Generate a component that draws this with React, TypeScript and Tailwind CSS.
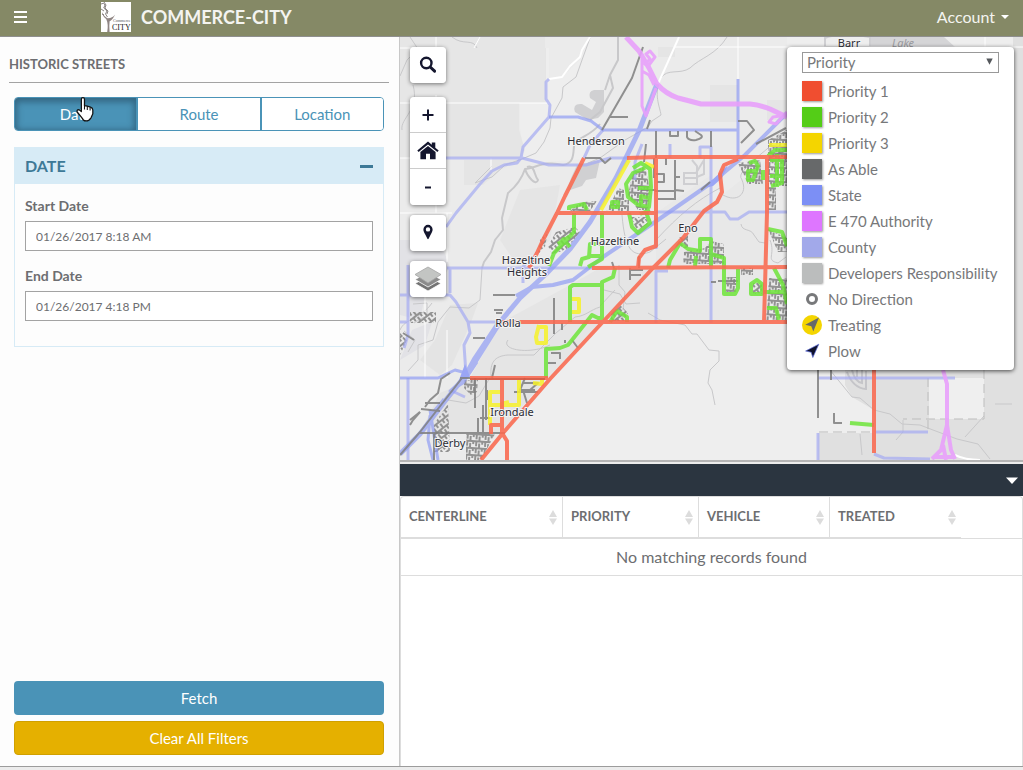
import { useState } from "react";
import type { ReactNode } from "react";

const FONT = "font-['Century_Gothic','Lato',sans-serif]";

type Line = { d: string; w?: number };

const WHITE_ROADS: Line[] = [
  { d: "M436 37V60M436 95V213M400 48H436M400 103H549M400 158H446M400 213H452M738 37V79M675 47H1023M985 37V47", w: 1 },
  { d: "M679 37L658 84M590 37L582 50L580 57L570 66L562 77L549 79", w: 2 },
  { d: "M491 158V170M447 213V262M480 37L474 48M425 268V378M447 378V330", w: 1 },
];

const CREEKS: Line[] = [
  { d: "M590 38L582 60L576 77L563 87L562 98L551 118L550 128L544 142L536 153L522 159L505 165L492 177L483 180L475 183L482 176" },
  { d: "M527 167C535 164 534 176 538 180C536 187 527 176 525 169C522 178 518 185 508 193L502 218L503 230L495 240L491 252L484 262L482 268", w: 2 },
  { d: "M525 169C536 168 545 160 563 165C577 163 572 148 575 142C585 135 592 134 600 124", w: 2 },
  { d: "M618 37V60L610 75L613 88L600 112L590 120M610 75L605 90", w: 2 },
  { d: "M727 37C716 55 700 58 690 68C680 75 667 68 661 78C653 94 660 107 661 115L652 121L648 127L625 140L600 158L588 163" },
  { d: "M410 37L418 49L407 60L400 76M452 37C463 46 473 38 477 48" },
  { d: "M482 268L480 300L469 308L450 307L438 322L433 340L418 345V360L408 371" },
  { d: "M600 307C590 310 586 316 575 317L556 333L534 355H508C494 356 490 363 491 376L479 396L466 403L448 400M600 306L615 290" },
  { d: "M604 290L620 294L626 304L640 303M648 313L660 320L675 323L685 325L692 334H697L709 350L719 351V361L710 370L708 383L712 390L715 405" },
  { d: "M619 265V285L625 292L623 310M622 215C625 250 632 258 650 252L666 239M656 240C679 215 697 200 720 188" },
  { d: "M723 195C737 203 748 194 742 180C737 173 748 168 750 163L767 149L786 130M741 224C742 232 751 228 754 235L759 242L765 243" },
  { d: "M432 303C420 320 405 318 400 330M413 304L427 303V315L414 323M404 331L415 340L408 352" },
  { d: "M830 370L852 397L860 398L874 410L890 414L902 424L920 425L933 430L957 439L978 444L990 459M903 420V432L896 440M965 437L984 416M860 434L862 455M995 404L1012 404" },
  { d: "M480 178L492 166M413 85C420 110 400 118 402 130M508 340C500 350 530 355 550 345M770 240C776 255 765 260 778 263L786 257" },
];

const BLUE: Line[] = [
  { d: "M657 84L639 131L616 178L590 222L570 249L546 274L520 298L500 322L470 370L445 401L420 434L400 454", w: 5 },
  { d: "M787 113L745 155L714 181L655 222L603 257L573 280L553 285L532 287L516 296", w: 4 },
  { d: "M498 322L474 358L462 380L450 391L463 383L477 362", w: 3 },
  { d: "M738 79V156M602 130H738M549 117H578L591 121L603 130", w: 3 },
  { d: "M444 399L430 416L428 440L433 460M430 410L438 460M400 378H438L455 370L466 373", w: 3 },
];

const COUNTY: Line[] = [
  { d: "M549 79L546 82V99L550 105L549 117L523 147L521 158L517 163L504 165L492 171L480 184L456 213L446 227" },
  { d: "M446 158H522L549 165H586L610 158H627M603 130L590 145L584 158" },
  { d: "M447 268H592M400 295H450L456 302L468 322H502M450 269V293M468 322L470 333L464 345L466 374" },
  { d: "M408 265V335L404 348M408 378V460M400 322H407" },
  { d: "M642 144L635 162V180M670 144V158M700 158V147H711V323M656 212H716L725 212L730 219H738L749 212H787" },
  { d: "M656 323V271H668M656 249V212M818 378H955M876 432H928M818 433V460M874 454L884 458L930 459" },
  { d: "M523 283V267L530 258M452 391L465 397" },
];

const GREY: Line[] = [
  { d: "M643 47L632 78L602 130M610 117H628M585 158H600L605 163L611 158M656 131V158M646 144L644 162M711 131V147M670 131V136H678V131M687 131V137Q689 141 696 140Q704 138 701 135L695 131M650 120L647 129" },
  { d: "M738 121H747L754 130L741 143M654 158V178M666 158V165M675 160V200M655 191H675M656 174H664V182H657M675 177H680M675 190L684 191M658 199H675M641 190H656" },
  { d: "M462 378L420 432L400 455M420 433H505M460 378H470M818 370V418M493 295H515M494 310H503M496 313H502M473 338H485M554 298V334M562 323V330" },
  { d: "M450 373L441 379L438 393L430 400L425 407M425 403H440M421 409L440 411M420 412L413 420L410 425M495 365L492 378M475 378V408M486 378V420M478 418V432M483 405V433M487 390V400" },
  { d: "M525 378L520 390H535M548 363H556M551 353H560V359M572 340L578 348M565 343V340M523 383H538L530 390M523 390L527 403M514 392H538M480 418H490" },
  { d: "M630 268V280M629 270H643M639 256V268M641 275H630M612 262L614 268M718 281H738M711 282H716M769 158L787 150M756 144L786 128M701 190L710 182" },
  { d: "M831 370V380M834 413V423H842M800 130L785 160M403 333L414 340M434 460V433M410 420L420 412", w: 2 },
];

const RED: Line[] = [
  { d: "M584 158L565 196L557 213L543 240L537 253L529 268" },
  { d: "M557 213H655M627 158L656 157H787M656 157V246L645 250L639 258L638 268" },
  { d: "M738 159L724 165L720 174L722 192L717 202L704 211L683 238L653 268L600 325L550 379L503 433L481 460" },
  { d: "M767 158V213L764 323M592 268L787 267M500 322H787M470 378H548M502 378V433L507 441V460M502 425H491V434" },
  { d: "M874 370V453" },
];

const GREEN: Line[] = [
  { d: "M569 210V207L584 204L587 210M574 213V232L554 253L549 266M562 238L570 247M558 244L572 235M580 266L582 259L589 257L590 244H600M589 256H601" },
  { d: "M633 168L641 163L650 169L651 187L649 207L638 205L628 197L626 184L633 173L645 168M638 188H650M641 205V196L648 198M612 202H618V207H612Z" },
  { d: "M629 213L632 227L638 233L650 223L646 212M602 213V259L588 267M650 210L640 214" },
  { d: "M749 163L755 161L758 166L753 180H748V171H757M763 170V180M768 156L775 150H787M777 154V187M770 160H782V183L771 186M770 176H783" },
  { d: "M546 378V349L560 348L568 345L580 330L592 315L598 318H602V282L613 277L615 268M570 322V287L573 285H601" },
  { d: "M668 268L670 260L680 243L688 249L700 251V239H711V254L724 258V294H735L738 288V269M711 254V266M695 266L696 256" },
  { d: "M757 280L751 284V294H762V284ZM761 292H784M774 268L783 285L787 304M768 229L782 232L787 246M767 308H776L779 320" },
  { d: "M610 322L617 311L627 317V322M850 423L874 425" },
];

const YELLOW: Line[] = [
  { d: "M629 160L601 210M645 163L654 167M769 145H787M572 299L579 299V312H572" },
  { d: "M538 327H546V343H537L536 337L539 325M490 425V392H500M491 405H519V380M533 383L542 384V379M501 404L509 402" },
];

const MAGENTA: Line[] = [
  { d: "M626 37L639 51L649 68L657 84Q666 94 678 98Q690 101 701 104H750Q760 105 770 109L787 117", w: 5 },
  { d: "M642 59V106L646 116L656 88M642 71L649 75L654 85M644 65L650 59L646 54L650 51L655 57L649 65M787 115L773 117L769 122L776 124L787 112", w: 3 },
  { d: "M943 370L947 384L947 425L941 450L932 459M947 425L951 450L955 459M943 445L946 460M934 457H954", w: 4 },
];

const TOWNS = [
  { x: 596, y: 145, t: "Henderson" },
  { x: 615, y: 245, t: "Hazeltine" },
  { x: 688, y: 232, t: "Eno" },
  { x: 526, y: 264, t: "Hazeltine" },
  { x: 527, y: 276, t: "Heights" },
  { x: 508, y: 327, t: "Rolla" },
  { x: 512, y: 416, t: "Irondale" },
  { x: 450, y: 447, t: "Derby" },
  { x: 849, y: 47, t: "Barr" },
];

function Lines({ items, color, width, opacity = 1 }: { items: Line[]; color: string; width: number; opacity?: number }) {
  return (
    <g fill="none" stroke={color} strokeLinejoin="round" opacity={opacity}>
      {items.map((l) => (
        <path key={l.d} d={l.d} strokeWidth={l.w ?? width} />
      ))}
    </g>
  );
}

function StreetMap() {
  return (
    <svg viewBox="400 37 623 424" preserveAspectRatio="xMinYMin slice" className="block h-full w-full" aria-label="Street map">
      <defs>
        <pattern id="blocks" width="9" height="7" patternUnits="userSpaceOnUse" patternTransform="rotate(4)">
          <path d="M0 1H7M2 1V6M5 3V7M8 0V4" stroke="#929292" strokeWidth="2" fill="none" />
        </pattern>
        <pattern id="slanted" width="8" height="7" patternUnits="userSpaceOnUse" patternTransform="rotate(-38)">
          <path d="M0 1H8M2 1V5M6 3V7" stroke="#929292" strokeWidth="2" fill="none" />
        </pattern>
      </defs>
      <rect x="400" y="37" width="623" height="424" fill="#eeeeee" />
      <path d="M400 37H590L580 60L562 77L549 79V48H546V103H520V128L523 147L521 158L545 162L600 158V37H787V323H600L482 460H400Z" fill="#ebebeb" />
      <path d="M436 48H546V103H519V130L525 150L520 158H436ZM400 103H436V158H400Z" fill="#e5e5e5" />
      <path d="M400 37H545V103H400Z" fill="#e6e6e6" />
      <path d="M464 160H520L500 170L483 185H464ZM520 190L560 185L550 240L519 268L500 240ZM710 85H738V122H710ZM658 47H675V57H658ZM767 100H787V120H767Z" fill="#e5e5e5" />
      <path d="M500 323L570 285L600 268H764V323H603L550 378H470Z" fill="#e5e5e5" />
      <path d="M656 213L711 175V323H656ZM722 195L767 160V323H711V213Z" fill="#e8e8e8" />
      <path d="M450 305L478 303L470 325L452 365L440 375L420 360L435 340ZM440 393L470 380H545L500 433H420Z" fill="#e4e4e4" />
      <path d="M400 240H440L450 268L425 295L420 320L400 315ZM412 330L432 322L425 345L400 360Z" fill="#e2e2e6" />
      <path d="M874 370H1023V461H874V410L852 397L845 385V370ZM818 433H874V460H818ZM1013 37H1023V370H1013Z" fill="#e0e0e0" />
      <path d="M929 378H984V419H929Z" fill="#efefef" />
      <path d="M590 98Q588 91 594 90H604V112L598 118L588 120L575 112Q572 103 582 104L592 110L596 102ZM577 165L600 160L596 178L586 180L582 186L567 191L571 178Z" fill="#d0d0d2" />
      <path d="M870 37H944L955 47H870Z" fill="#d5d5d7" />
      <path d="M825 38Q840 32 870 37V47H825ZM692 160L697 166V177L704 174V160L696 173H684V184H697V172M684 178H697" fill="none" stroke="#cfcfd2" strokeWidth="2" />
      <path d="M847 372Q853 388 866 389V371M852 370Q855 382 862 383V370M857 370V377" fill="none" stroke="#c5c5c9" strokeWidth="2" />
      <Lines items={CREEKS} color="#c8c8ca" width={1} />
      <Lines items={WHITE_ROADS} color="#ffffff" width={1} />
      <path d="M819 432H874M928 378V430M984 370V419H903" fill="none" stroke="#bdbdbd" strokeWidth="1" strokeDasharray="9 5" />
      <path d="M955 455Q965 460 980 460" fill="none" stroke="#fff" strokeWidth="2" />

      <path d="M576 206L584 202L597 201L590 211H570ZM633 172L645 166L650 190L648 210H638L628 195ZM612 201L618 188L624 190V200H629V211H606ZM738 163L760 160L763 184H748ZM768 140L787 130V186H776V210H768ZM769 278H787V320H766ZM684 252L705 248L711 241L724 244V264H683ZM464 380H478L477 392L471 395L464 388ZM466 434H495L481 460H466ZM726 277H736V292H726ZM768 229L787 238V252H778ZM741 268H753V275H741Z" fill="url(#blocks)" />
      <path d="M556 232L575 227L580 232L566 250L552 254L548 246ZM631 217H646L648 224L637 231ZM410 312H436V323H410ZM400 333L407 340L400 355ZM434 424L448 404L450 452H434ZM611 314L620 305L628 313L624 321H611ZM678 238L688 235V248H680ZM753 283H762V294H753ZM540 240L548 231L545 247L538 254Z" fill="url(#slanted)" />

      <Lines items={COUNTY} color="#a5abf3" width={3} opacity={0.7} />
      <Lines items={BLUE} color="#8e9bf5" width={4} opacity={0.68} />
      <path d="M728 165L704 188L713 186L722 178ZM465 364L459 380L470 377Z" fill="#9aa5f5" />
      <Lines items={GREY} color="#808080" width={2} opacity={0.85} />
      <Lines items={MAGENTA} color="#e8a0fb" width={4} opacity={0.9} />
      <Lines items={YELLOW} color="#f7f229" width={4} opacity={0.85} />
      <Lines items={GREEN} color="#6fe53b" width={4} opacity={0.85} />
      <Lines items={RED} color="#fa6a50" width={4} opacity={0.88} />
      <path d="M470 379H545" stroke="#b54836" strokeWidth="1" />

      <g className="font-['Noto_Sans',sans-serif] text-[11px]" textAnchor="middle" stroke="#f4f4f4" strokeWidth="2" strokeLinejoin="round" paintOrder="stroke" fill="#2d2d35">
        {TOWNS.map((p) => (
          <text key={p.t + p.y} x={p.x} y={p.y}>
            {p.t}
          </text>
        ))}
      </g>
      <text x="903" y="47" textAnchor="middle" fill="#9a9a9e" className="font-['Noto_Sans',sans-serif] text-[11px] italic">
        Lake
      </text>
    </svg>
  );
}

function MapButton({ label, className = "", children }: { label: string; className?: string; children: ReactNode }) {
  return (
    <button type="button" aria-label={label} className={`flex h-9 w-9 items-center justify-center bg-white text-[#14162e] ${className}`}>
      {children}
    </button>
  );
}

function MapControls() {
  const box = "overflow-hidden rounded shadow-[0_1px_4px_rgba(0,0,0,0.5)]";
  return (
    <div className="absolute top-[10px] left-[10px] flex flex-col gap-[10px]">
      <div className={box}>
        <MapButton label="Search">
          <svg width="18" height="18" viewBox="0 0 18 18" fill="none" stroke="currentColor">
            <circle cx="7.3" cy="7" r="5.2" strokeWidth="2.4" />
            <path d="M11.2 11L15.6 15.2" strokeWidth="3" strokeLinecap="round" />
          </svg>
        </MapButton>
      </div>
      <div className={`mt-1 divide-y divide-[#cccccc] ${box}`}>
        <MapButton label="Zoom in">
          <svg width="12" height="12" viewBox="0 0 12 12" stroke="currentColor" strokeWidth="2">
            <path d="M6 0.5V11.5M0.5 6H11.5" />
          </svg>
        </MapButton>
        <MapButton label="Home extent">
          <svg width="22" height="20" viewBox="0 0 22 20" fill="currentColor">
            <path d="M11 0.6L14.8 3.8V1.6H18.3V6.8L21.7 9.6L20.4 11.1L11 3.4L1.6 11.1L0.3 9.6Z" />
            <path d="M11 4.9L18.6 11V18.2H13V12.7H9V18.2H3.4V11Z" />
          </svg>
        </MapButton>
        <MapButton label="Zoom out">
          <svg width="8" height="4" viewBox="0 0 8 4" fill="currentColor">
            <path d="M1 1.5H7V3.5H1Z" />
          </svg>
        </MapButton>
      </div>
      <div className={box}>
        <MapButton label="Locate" className="text-[#3d4142]">
          <svg width="10" height="18" viewBox="0 0 10 18" fill="currentColor" fillRule="evenodd">
            <path d="M5 0.8A4.6 4.6 0 0 1 9.6 5.4C9.6 7.1 8.8 8.4 8 9.9L5.6 14.7Q5 15.6 4.4 14.7L2 9.9C1.2 8.4 0.4 7.1 0.4 5.4A4.6 4.6 0 0 1 5 0.8ZM5 3.2A2.2 2.2 0 1 0 5 7.6A2.2 2.2 0 0 0 5 3.2Z" />
          </svg>
        </MapButton>
      </div>
      <div className={box}>
        <MapButton label="Layers">
          <svg width="28" height="26" viewBox="0 0 28 26">
            <path d="M1 17.5L14 10.5L27 17.5L14 25Z" fill="#747474" stroke="#fff" strokeWidth="0.8" />
            <path d="M1 13.5L14 6.5L27 13.5L14 21Z" fill="#8b8b8b" stroke="#fff" strokeWidth="0.8" />
            <path d="M1 8.5L14 1L27 8.5L14 17Z" fill="#c3c5c3" stroke="#a5a5a5" strokeWidth="0.8" />
          </svg>
        </MapButton>
      </div>
    </div>
  );
}

const SWATCHES = [
  { label: "Priority 1", color: "bg-[#f04e30]" },
  { label: "Priority 2", color: "bg-[#54cd17]" },
  { label: "Priority 3", color: "bg-[#f4d500]" },
  { label: "As Able", color: "bg-[#67696a]" },
  { label: "State", color: "bg-[#7c8ff5]" },
  { label: "E 470 Authority", color: "bg-[#de76ff]" },
  { label: "County", color: "bg-[#a2a9ea]" },
  { label: "Developers Responsibility", color: "bg-[#bbbdbd]" },
];

function LegendRow({ mark, label }: { mark: ReactNode; label: string }) {
  return (
    <li className="flex h-[26px] items-center gap-[6px]">
      <span className="flex h-5 w-5 shrink-0 items-center justify-center">{mark}</span>
      <span className="whitespace-nowrap">{label}</span>
    </li>
  );
}

function Legend() {
  return (
    <div className="absolute top-[10px] right-[9px] w-[227px] rounded bg-white px-[15px] pt-[5px] pb-[6px] text-[15px] text-[#77787a] shadow-[0_1px_4px_rgba(0,0,0,0.7)]">
      <div className="relative">
        <select aria-label="Legend layer" defaultValue="Priority" className="block h-[21px] w-full appearance-none border border-[#999999] bg-white px-1 leading-[19px]">
          <option>Priority</option>
          <option>Vehicle</option>
        </select>
        <svg width="7" height="7" viewBox="0 0 7 7" className="pointer-events-none absolute top-[6px] right-[6px]">
          <path d="M0.3 0.5H6.7L3.5 6.8Z" fill="#55585c" />
        </svg>
      </div>
      <ul className="mt-[5px]">
        {SWATCHES.map((s) => (
          <LegendRow key={s.label} label={s.label} mark={<span className={`h-5 w-5 shadow-[1px_1px_2px_rgba(0,0,0,0.4)] ${s.color}`} />} />
        ))}
        <LegendRow label="No Direction" mark={<span className="h-3 w-3 rounded-full border-[3px] border-[#77787a]" />} />
        <LegendRow
          label="Treating"
          mark={
            <svg width="20" height="20" viewBox="0 0 20 20">
              <circle cx="10" cy="10" r="10" fill="#f4d500" />
              <path d="M17 2.5L11.3 16.5L9.3 11.2L3.2 9.8Z" fill="#67696a" />
            </svg>
          }
        />
        <LegendRow
          label="Plow"
          mark={
            <svg width="20" height="20" viewBox="0 0 20 20">
              <path d="M16.8 3.2L10.8 16.5L9.2 11.3L3.6 10Z" fill="#10122b" stroke="#5a6ad8" strokeWidth="0.7" />
            </svg>
          }
        />
      </ul>
    </div>
  );
}

function Logo() {
  return (
    <svg width="30" height="30" viewBox="0 0 30 30" role="img" aria-label="Commerce City">
      <rect width="30" height="30" fill="#fff" />
      <path d="M6.2 30Q7.6 22 5.2 17Q1.8 15 1 10Q3.3 15 6.5 16.2Q11 16.5 14.2 12.5Q11.2 18.5 8.6 19.3Q8 24 8.6 30Z" fill="#8f8583" />
      <path d="M0 2Q3 0 4 3L2.8 6L6 9L4.5 12L6.5 15M3 0L5 3L4 6L7 9L6 12M0 7L3 9M1 12L3 13" fill="none" stroke="#5a5350" strokeWidth="0.7" />
      <text x="12" y="20" fill="#555" className="font-['Liberation_Serif',serif] text-[4px]">Commerce</text>
      <text x="11" y="28" fill="#222" className="font-['Liberation_Serif',serif] text-[8px]">CITY</text>
    </svg>
  );
}

function HandCursor() {
  return (
    <svg width="18" height="25" viewBox="0 0 17 24" className="pointer-events-none absolute top-0 left-[62px]">
      <path
        d="M5 2.2Q5 0.6 6.5 0.6T8 2.2V8.2L10.7 8.8L13.8 9.7Q16 10.4 16 12.5V16L14.3 20Q12.5 23 9.5 23T6.2 20.8L1 14.4Q0.4 12.6 2 12.2Q3.4 12.2 5 14Z"
        fill="#fff"
        stroke="#111"
        strokeWidth="1.2"
        strokeLinejoin="round"
      />
      <path d="M8 7V12M10.7 8.8V12.5M13.4 9.8V13" stroke="#111" strokeWidth="1" />
    </svg>
  );
}

const TABS = ["Date", "Route", "Location"];

function Sidebar() {
  const [tab, setTab] = useState("Date");
  return (
    <aside className="flex w-[400px] shrink-0 flex-col border-r border-[#c8c8c8] bg-[#fdfdfd]">
      <h1 className="mr-[10px] ml-[9px] flex h-[46px] items-center border-b border-[#a3a3a3] pt-[10px] text-[13px] font-bold text-[#6d6e71]">HISTORIC STREETS</h1>
      <div className="flex grow flex-col pt-[14px] pr-[15px] pb-[11px] pl-[14px]">
        <div className="relative">
          <div className="flex h-[34px] divide-x-2 divide-[#4a93b7] overflow-hidden rounded border border-[#4a93b7]">
            {TABS.map((t) => (
              <button
                key={t}
                type="button"
                aria-pressed={tab === t}
                onClick={() => setTab(t)}
                className={
                  tab === t
                    ? "flex-1 bg-[#4a93b7] text-[15px] text-white shadow-[inset_0_2px_6px_2px_rgba(30,60,80,0.5)]"
                    : "flex-1 bg-white text-[15px] text-[#4a93b7]"
                }
              >
                {t}
              </button>
            ))}
          </div>
          <HandCursor />
        </div>
        <section className="mt-4 border border-[#d7ebf6]">
          <div className="flex h-9 items-center justify-between bg-[#d7ebf6] px-[10px] text-[#3d7997]">
            <h2 className="text-base font-bold">DATE</h2>
            <button type="button" aria-label="Collapse date filter" className="flex h-5 w-[13px] items-center">
              <span className="h-[3px] w-full bg-[#3d7997]" />
            </button>
          </div>
          <div className="flex flex-col gap-[15px] px-[10px] pt-3 pb-[25px] text-[#6d6e71]">
            <div>
              <label htmlFor="start" className="block h-5 text-sm leading-5 font-bold">Start Date</label>
              <input id="start" type="text" defaultValue="01/26/2017 8:18 AM" className="mt-[5px] block h-[30px] w-full border border-[#a3a3a3] bg-white px-[10px] text-xs" />
            </div>
            <div>
              <label htmlFor="end" className="block h-5 text-sm leading-5 font-bold">End Date</label>
              <input id="end" type="text" defaultValue="01/26/2017 4:18 PM" className="mt-[5px] block h-[30px] w-full border border-[#a3a3a3] bg-white px-[10px] text-xs" />
            </div>
          </div>
        </section>
        <div className="mt-auto flex flex-col gap-[6px] text-[15px] text-white">
          <button type="button" className="h-[34px] rounded bg-[#4a93b7]">Fetch</button>
          <button type="button" className="h-[34px] rounded border border-[#d0a000] bg-[#e5b000]">Clear All Filters</button>
        </div>
      </div>
    </aside>
  );
}

const COLUMNS = [
  { name: "CENTERLINE", width: "w-[162px]", edge: "border-r" },
  { name: "PRIORITY", width: "w-[136px]", edge: "border-r" },
  { name: "VEHICLE", width: "w-[131px]", edge: "border-r" },
  { name: "TREATED", width: "w-[131px]", edge: "" },
];

function Results() {
  return (
    <section className="flex grow flex-col bg-white">
      <div className="flex h-8 items-center justify-end bg-[#2b3540] pr-[5px]">
        <button type="button" aria-label="Collapse results">
          <svg width="12" height="7" viewBox="0 0 12 7">
            <path d="M0 0.5H12L6 7Z" fill="#fff" />
          </svg>
        </button>
      </div>
      <div className="grow rounded-t border border-b-0 border-[#dddddd] text-[#6d6e71]">
        <table className="w-full table-fixed border-separate border-spacing-0">
          <thead>
            <tr>
              {COLUMNS.map((c) => (
                <th key={c.name} className={`h-[42px] border-b-2 border-[#dddddd] pr-[5px] pl-2 text-left text-[13px] font-bold ${c.width} ${c.edge}`}>
                  <span className="flex items-center justify-between">
                    {c.name}
                    <svg width="8" height="15" viewBox="0 0 8 15" fill="#dcdcdc">
                      <path d="M4 0L8 7H0ZM4 15L8 8.5H0Z" />
                    </svg>
                  </span>
                </th>
              ))}
              <td className="border-b border-[#dddddd]" />
            </tr>
          </thead>
          <tbody>
            <tr>
              <td colSpan={5} className="h-[37px] border-b border-[#dddddd] text-center text-base leading-5">No matching records found</td>
            </tr>
          </tbody>
        </table>
      </div>
    </section>
  );
}

export default function App() {
  return (
    <div className={`flex min-h-screen flex-col bg-[#ececec] ${FONT}`}>
      <header className="flex h-[37px] items-center border-b border-[#8f8f8f] bg-[#858966] text-[#f4f4f0]">
        <button type="button" aria-label="Menu" className="ml-[14px] flex w-[13px] flex-col gap-[2px] pb-[2px]">
          <span className="h-[2px] bg-white" />
          <span className="mt-px h-[2px] bg-white" />
          <span className="mt-px h-[2px] bg-white" />
        </button>
        <div className="ml-[74px] flex items-center gap-[10px] pb-[2px]">
          <Logo />
          <span className="text-lg font-bold">COMMERCE-CITY</span>
        </div>
        <button type="button" className="mr-[14px] ml-auto flex items-center gap-[6px] pb-[2px] text-base">
          Account
          <svg width="8" height="4" viewBox="0 0 8 4">
            <path d="M0 0H8L4 4Z" fill="#fff" />
          </svg>
        </button>
      </header>
      <div className="flex grow border-b border-[#9c9c9c]">
        <Sidebar />
        <main className="flex min-w-0 grow flex-col">
          <div className="relative h-[425px] overflow-hidden border-b-2 border-[#b5b5b5]">
            <StreetMap />
            <MapControls />
            <Legend />
          </div>
          <div className="h-[2px] bg-[#ececec]" />
          <Results />
        </main>
      </div>
      <div className="h-[3px] shrink-0 bg-[#ececec]" />
    </div>
  );
}
